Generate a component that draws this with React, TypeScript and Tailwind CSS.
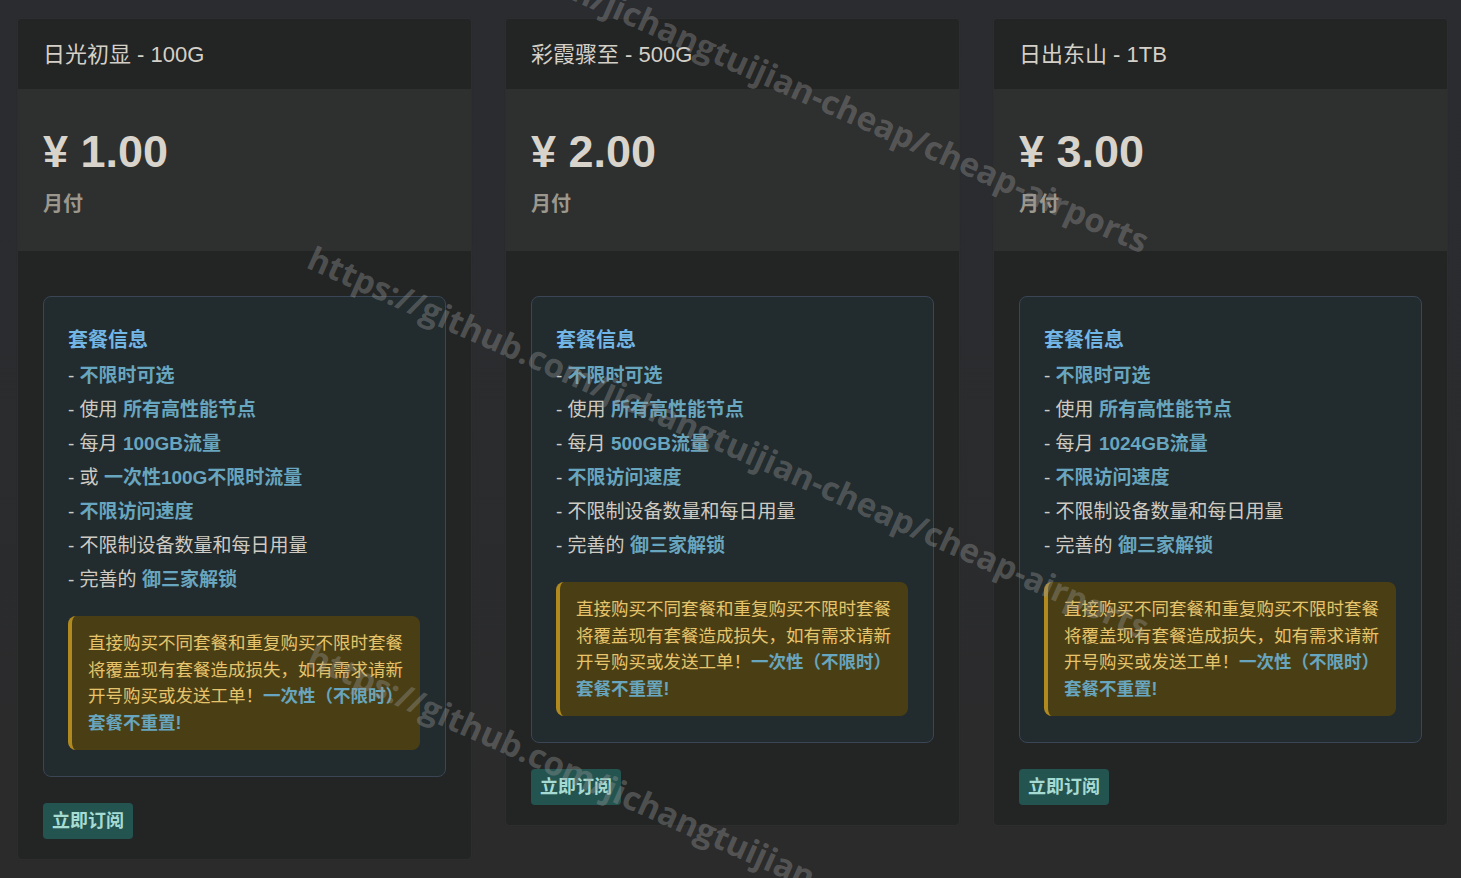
const font = { fontFamily: '"Liberation Sans", "Noto Sans CJK SC", sans-serif' }

type Line = { pre?: string; hl?: string }

type Plan = {
    title: string
    price: string
    lines: Line[]
}

const plans: Plan[] = [
    {
        title: '日光初显 - 100G',
        price: '¥ 1.00',
        lines: [
            { hl: '不限时可选' },
            { pre: '使用 ', hl: '所有高性能节点' },
            { pre: '每月 ', hl: '100GB流量' },
            { pre: '或 ', hl: '一次性100G不限时流量' },
            { hl: '不限访问速度' },
            { pre: '不限制设备数量和每日用量' },
            { pre: '完善的 ', hl: '御三家解锁' },
        ],
    },
    {
        title: '彩霞骤至 - 500G',
        price: '¥ 2.00',
        lines: [
            { hl: '不限时可选' },
            { pre: '使用 ', hl: '所有高性能节点' },
            { pre: '每月 ', hl: '500GB流量' },
            { hl: '不限访问速度' },
            { pre: '不限制设备数量和每日用量' },
            { pre: '完善的 ', hl: '御三家解锁' },
        ],
    },
    {
        title: '日出东山 - 1TB',
        price: '¥ 3.00',
        lines: [
            { hl: '不限时可选' },
            { pre: '使用 ', hl: '所有高性能节点' },
            { pre: '每月 ', hl: '1024GB流量' },
            { hl: '不限访问速度' },
            { pre: '不限制设备数量和每日用量' },
            { pre: '完善的 ', hl: '御三家解锁' },
        ],
    },
]

function PlanCard({ plan }: { plan: Plan }) {
    return (
        <div className="rounded-[4px] overflow-hidden shadow-[0_0_2px_rgba(60,60,60,0.6)] bg-[#232525]">
            {/* header */}
            <div className="h-[70px] bg-[#232424] px-[25px] flex items-center">
                <span className="text-[22px] text-[#d4d0c8]">{plan.title}</span>
            </div>

            {/* price */}
            <div className="h-[162px] bg-[#2e2f2f] px-[25px] pt-[37px]">
                <div className="text-[45px] font-bold leading-[52px] text-[#d8d3cb]">{plan.price}</div>
                <div className="text-[20px] font-bold leading-[28px] mt-[12px] text-[#9c978d]">月付</div>
            </div>

            {/* body */}
            <div className="px-[25px] pt-[45px] pb-[20px]">
                <div className="rounded-lg border border-[#3a4655] bg-[#222b2d] pt-[26px] pb-[26px] pl-[24px] pr-[25px]">
                    <div className="text-[20px] font-bold leading-[34px] mb-[2px] text-[#72b6e6]">套餐信息</div>
                    {plan.lines.map((l, i) => (
                        <div key={i} className="text-[19px] leading-[34px] text-[#cfcbc3]">
                            - {l.pre}
                            {l.hl && <b className="text-[#68a5bf]">{l.hl}</b>}
                        </div>
                    ))}
                    <div className="mt-[19px] rounded-lg border-l-[4px] border-[#b08a1e] bg-[#4a3f14] pl-[16px] pr-[13px] py-[14px] text-[17.5px] leading-[26.5px] text-[#e6c46c]">
                        直接购买不同套餐和重复购买不限时套餐将覆盖现有套餐造成损失，如有需求请新开号购买或发送工单！
                        <b className="text-[#68a5bf]">一次性（不限时）套餐不重置!</b>
                    </div>
                </div>
                <button className="mt-[26px] h-[36px] px-[9px] rounded-[4px] bg-[#245450] text-[18px] font-bold text-[#a6dbd3]">
                    立即订阅
                </button>
            </div>
        </div>
    )
}

const mark = 'https://github.com/jichangtuijian-cheap/cheap-airports'

export default function App() {
    return (
        <div
            className="relative min-h-screen h-[878px] overflow-hidden bg-gradient-to-b from-[#2a2c30] to-[#2b2b2b] pl-[18px] pr-[14px] pt-[19px]"
            style={font}
        >
            <div className="grid grid-cols-3 gap-[35px] items-start">
                {plans.map((p) => (
                    <PlanCard key={p.title} plan={p} />
                ))}
            </div>

            {/* watermark */}
            <div className="pointer-events-none absolute inset-0" style={{ fontFamily: '"Open Sans", sans-serif' }}>
                {[-148, 238, 636].map((top) => (
                    <div
                        key={top}
                        className="absolute left-[318px] origin-top-left rotate-[24deg] whitespace-nowrap text-[33px] font-bold leading-[40px] text-[rgba(150,150,150,0.4)]"
                        style={{ top }}
                    >
                        {mark}
                    </div>
                ))}
            </div>
        </div>
    )
}
